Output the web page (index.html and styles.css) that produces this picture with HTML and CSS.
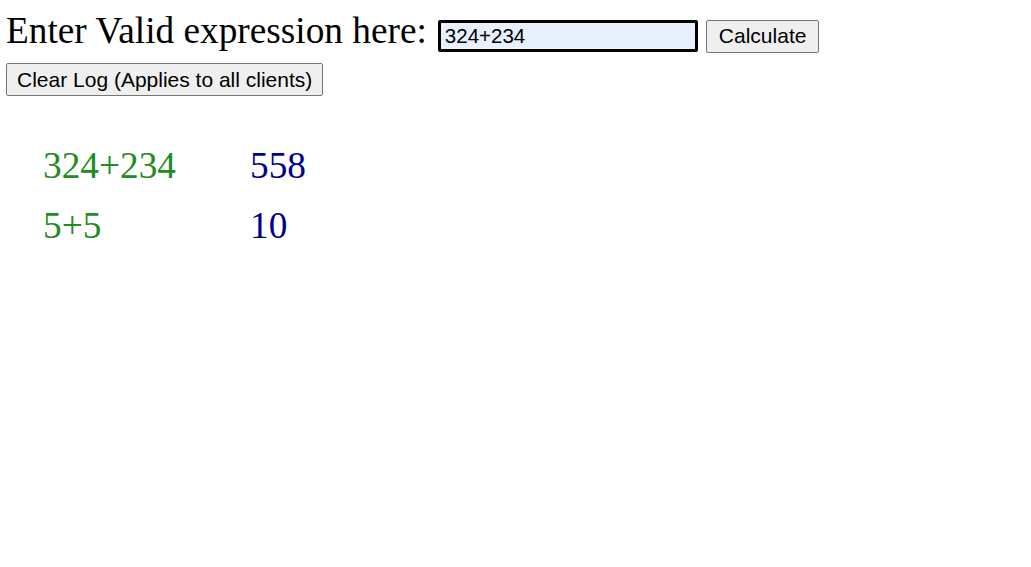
FILE: index.html
```html
<!DOCTYPE html>
<html>
<head>
<meta charset="utf-8">
<link rel="stylesheet" href="styles.css">
</head>
<body>
<div class="form-row">
  <span class="prompt">Enter Valid expression here:</span>
  <input class="expr" type="text" value="324+234">
  <button class="btn">Calculate</button>
</div>
<div class="clear-row">
  <button class="btn btn-clear">Clear Log (Applies to all clients)</button>
</div>
<table class="log">
  <tr><td class="expr-cell">324+234</td><td class="res-cell">558</td></tr>
  <tr><td class="expr-cell">5+5</td><td class="res-cell">10</td></tr>
</table>
</body>
</html>
```
FILE: styles.css
```css
body {
  margin: 6px;
  font-family: "Liberation Serif", "Times New Roman", serif;
  background: #fff;
  color: #000;
}
.form-row {
  display: flex;
  align-items: center;
  height: 44px;
  margin-top: 8px;
}
.prompt {
  font-size: 37.3px;
  line-height: 40px;
  margin-right: 11px;
  margin-bottom: 10px;
}
.expr {
  box-sizing: border-box;
  width: 260px;
  height: 32px;
  border: 3px solid #000;
  border-radius: 2px;
  background: #e8f0fe;
  font-family: "Liberation Sans", Arial, sans-serif;
  font-size: 20.5px;
  padding: 0 4px;
  margin: 0 8px 0 0;
  outline: none;
  color: #000;
}
.btn {
  box-sizing: border-box;
  height: 33px;
  font-family: "Liberation Sans", Arial, sans-serif;
  font-size: 21px;
  padding: 0 12px;
  background: #efefef;
  border: 1px solid #767676;
  border-radius: 2px;
  color: #000;
  margin: 0;
}
.btn-clear {
  padding: 0 10px;
}
.clear-row {
  margin-top: 5px;
}
.log {
  margin-top: 39px;
  margin-left: 37px;
  border-collapse: collapse;
  font-size: 37.3px;
}
.log td {
  padding: 0;
  height: 60px;
  vertical-align: middle;
}
.expr-cell {
  color: #228b22;
  width: 207px;
}
.res-cell {
  color: #00008b;
}
```
